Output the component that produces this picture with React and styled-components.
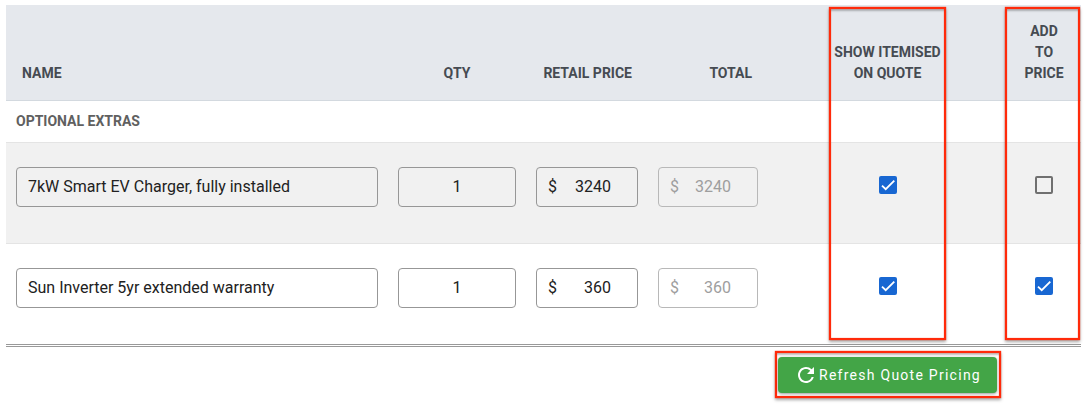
import { useState } from "react";
import styled, { createGlobalStyle, css } from "styled-components";
import { MdRefresh } from "react-icons/md";

const GlobalStyle = createGlobalStyle`
  * {
    box-sizing: border-box;
  }
  body {
    margin: 0;
    background: #fff;
    font-family: Roboto, "Liberation Sans", sans-serif;
  }
`;

const Page = styled.main`
  padding: 5px 6px 16px;
`;

const TableArea = styled.section`
  position: relative;
`;

const Table = styled.table`
  width: 100%;
  table-layout: fixed;
  border-collapse: separate;
  border-spacing: 0;
  border-bottom: 3px double #999;
`;

const Col = styled.col`
  width: ${(props) => props.$width}px;
`;

const HeadCell = styled.th`
  padding: 16px ${(props) => (props.$tight ? 6 : 16)}px;
  background: #e5e8ed;
  border-bottom: 1px solid #d3d9df;
  color: #464b52;
  font-size: 14px;
  font-weight: 700;
  line-height: 21px;
  text-align: ${(props) => props.$align || "center"};
  text-transform: uppercase;
  vertical-align: bottom;
`;

const GroupCell = styled.th`
  height: 42px;
  padding: 0 10px;
  border-bottom: 1px solid #e4e4e4;
  color: #606060;
  font-size: 14px;
  font-weight: 700;
  line-height: 21px;
  text-align: left;
  text-transform: uppercase;
`;

const Row = styled.tr`
  background: #fff;
  &:nth-child(even) {
    background: #f1f1f1;
  }
  &:not(:last-child) > td {
    border-bottom: 1px solid #e4e4e4;
  }
`;

const Cell = styled.td`
  padding: 24px 10px 36px;
  vertical-align: top;
`;

const CheckCell = styled.td`
  padding: 33px 0 0;
  text-align: center;
  vertical-align: top;
`;

const fieldBox = css`
  width: 100%;
  height: 40px;
  border: 1px solid #979797;
  border-radius: 4px;
  background: transparent;
  color: #212121;
  font-size: 16px;
`;

const TextInput = styled.input`
  ${fieldBox}
  display: block;
  padding: 0 11px 1px;
  font-family: inherit;
  text-align: ${(props) => props.$align || "left"};
`;

const MoneyBox = styled.label`
  ${fieldBox}
  display: flex;
  align-items: center;
  padding: 0 26px 1px 11px;
  ${(props) =>
    props.$disabled &&
    css`
      border-color: #b8b8b8;
      color: #9e9e9e;
    `}
`;

const MoneyInput = styled.input`
  flex: 1;
  min-width: 0;
  padding: 0;
  border: 0;
  background: transparent;
  color: inherit;
  font-family: inherit;
  font-size: 16px;
  text-align: right;
`;

const CheckLabel = styled.label`
  display: inline-grid;
  place-items: center;
  vertical-align: top;
  > * {
    grid-area: 1 / 1;
  }
`;

const CheckInput = styled.input`
  appearance: none;
  width: 18px;
  height: 18px;
  margin: 0;
  border: 2px solid #707070;
  border-radius: 2px;
  &:checked {
    border-color: #1867d2;
    background: #1867d2;
  }
`;

const Tick = styled.svg`
  width: 14px;
  height: 14px;
  fill: none;
  stroke: #fff;
  stroke-width: 3.12;
  pointer-events: none;
`;

const outline = css`
  border: 2px solid #ff2a0a;
  box-shadow: 0 0 1px #ff2a0a, inset 0 0 1px #ff2a0a,
    0 2px 3px rgba(0, 0, 0, 0.35), inset 0 3px 2px -1px rgba(0, 0, 0, 0.25);
`;

const ColumnHighlight = styled.div`
  ${outline}
  position: absolute;
  top: 2px;
  bottom: 7px;
  right: ${(props) => props.$right}px;
  width: ${(props) => props.$width}px;
  pointer-events: none;
`;

const Footer = styled.footer`
  display: flex;
  justify-content: flex-end;
  padding: 4px 80px 0 0;
`;

const ButtonHighlight = styled.div`
  ${outline}
  padding: 4px 2px 3px 1px;
`;

const RefreshButton = styled.button`
  display: flex;
  align-items: center;
  gap: 1px;
  height: 36px;
  padding: 0 16px;
  border: 0;
  border-radius: 4px;
  background: #43a547;
  box-shadow: 0 1px 3px rgba(0, 0, 0, 0.4);
  color: #fff;
  font-family: inherit;
  font-size: 14px;
  letter-spacing: 0.09em;
  white-space: nowrap;
  cursor: pointer;
`;

const extras = [
  {
    name: "7kW Smart EV Charger, fully installed",
    qty: 1,
    price: 3240,
    itemised: true,
    added: false,
  },
  {
    name: "Sun Inverter 5yr extended warranty",
    qty: 1,
    price: 360,
    itemised: true,
    added: true,
  },
];

function MoneyField({ label, value, onChange, disabled }) {
  return (
    <MoneyBox $disabled={disabled}>
      <span>$</span>
      <MoneyInput
        aria-label={label}
        value={value}
        onChange={onChange}
        disabled={disabled}
      />
    </MoneyBox>
  );
}

function Checkbox({ label, checked, onChange }) {
  return (
    <CheckLabel>
      <CheckInput
        type="checkbox"
        aria-label={label}
        checked={checked}
        onChange={onChange}
      />
      {checked && (
        <Tick viewBox="0 0 24 24" aria-hidden="true">
          <path d="M1.73,12.91 8.1,19.28 22.79,4.59" />
        </Tick>
      )}
    </CheckLabel>
  );
}

export default function App() {
  const [items, setItems] = useState(extras);
  const update = (index, field, value) => {
    setItems(
      items.map((item, i) => (i === index ? { ...item, [field]: value } : item))
    );
  };
  return (
    <>
      <GlobalStyle />
      <Page>
        <TableArea>
          <Table>
            <colgroup>
              <col />
              <Col $width={138} />
              <Col $width={122} />
              <Col $width={120} />
              <Col $width={60} />
              <Col $width={119} />
              <Col $width={60} />
              <Col $width={74} />
            </colgroup>
            <thead>
              <tr>
                <HeadCell $align="left">Name</HeadCell>
                <HeadCell>Qty</HeadCell>
                <HeadCell $align="right">Retail Price</HeadCell>
                <HeadCell $align="right">Total</HeadCell>
                <HeadCell as="td" />
                <HeadCell $tight>Show Itemised on Quote</HeadCell>
                <HeadCell as="td" />
                <HeadCell>Add to Price</HeadCell>
              </tr>
            </thead>
            <tbody>
              <tr>
                <GroupCell colSpan={8}>Optional Extras</GroupCell>
              </tr>
              {items.map((item, i) => (
                <Row key={i}>
                  <Cell>
                    <TextInput
                      aria-label="Name"
                      value={item.name}
                      onChange={(e) => update(i, "name", e.target.value)}
                    />
                  </Cell>
                  <Cell>
                    <TextInput
                      aria-label="Qty"
                      $align="center"
                      value={item.qty}
                      onChange={(e) => update(i, "qty", e.target.value)}
                    />
                  </Cell>
                  <Cell>
                    <MoneyField
                      label="Retail price"
                      value={item.price}
                      onChange={(e) => update(i, "price", e.target.value)}
                    />
                  </Cell>
                  <Cell>
                    <MoneyField
                      label="Total"
                      value={item.qty * item.price}
                      disabled
                    />
                  </Cell>
                  <Cell />
                  <CheckCell>
                    <Checkbox
                      label="Show itemised on quote"
                      checked={item.itemised}
                      onChange={(e) => update(i, "itemised", e.target.checked)}
                    />
                  </CheckCell>
                  <Cell />
                  <CheckCell>
                    <Checkbox
                      label="Add to price"
                      checked={item.added}
                      onChange={(e) => update(i, "added", e.target.checked)}
                    />
                  </CheckCell>
                </Row>
              ))}
            </tbody>
          </Table>
          <ColumnHighlight $right={135} $width={117} />
          <ColumnHighlight $right={1} $width={75} />
        </TableArea>
        <Footer>
          <ButtonHighlight>
            <RefreshButton type="button">
              <MdRefresh size={24} />
              Refresh Quote Pricing
            </RefreshButton>
          </ButtonHighlight>
        </Footer>
      </Page>
    </>
  );
}
